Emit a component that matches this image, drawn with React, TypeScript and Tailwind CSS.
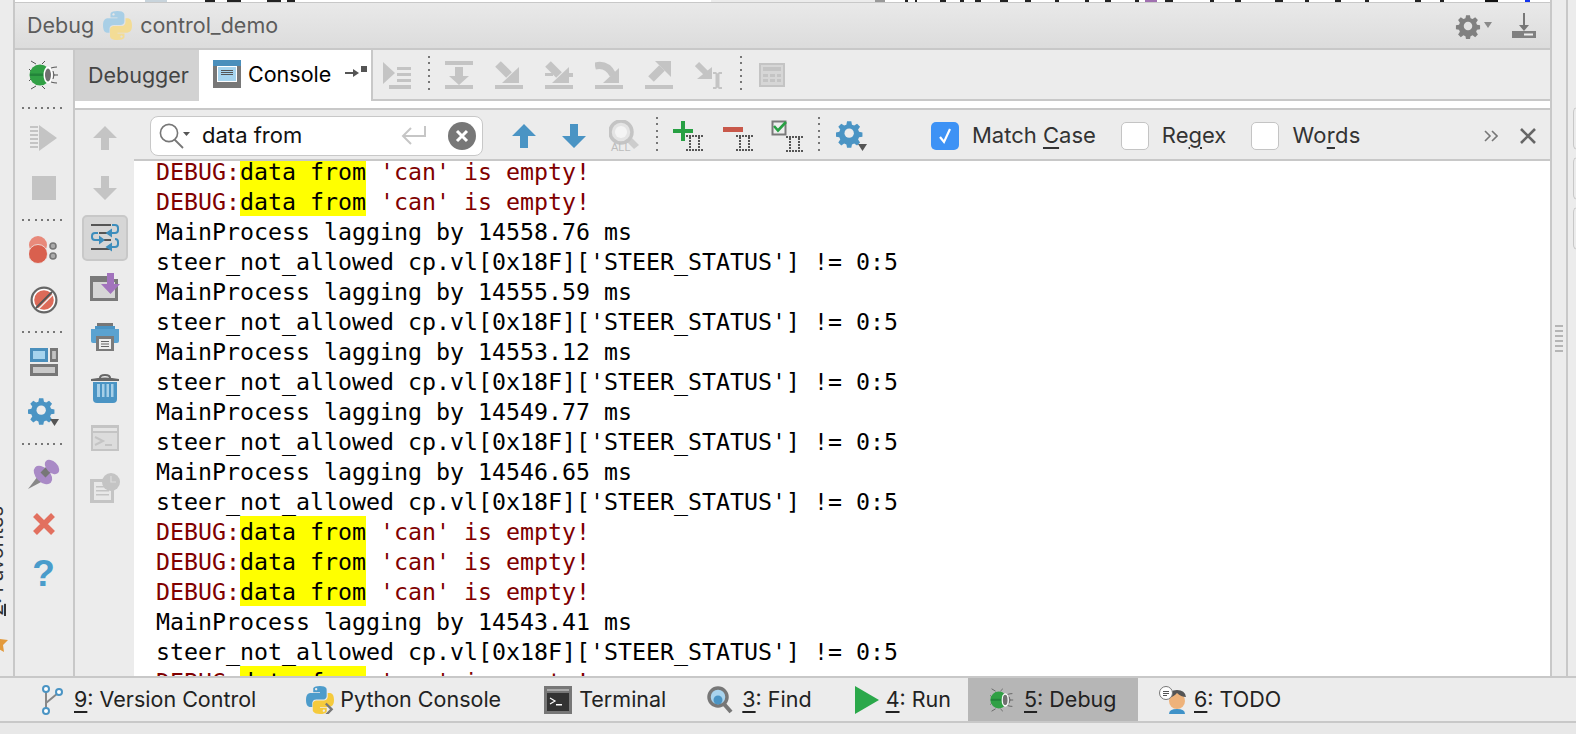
import React from "react";

const G = "#c4c4c4";
const B = "#4a94c4";

type P = { w?: number; h?: number; vb?: string; children?: React.ReactNode; className?: string };
const Ico = ({ w = 28, h = 28, vb, children, className = "" }: P) => (
  <svg width={w} height={h} viewBox={vb ?? `0 0 ${w} ${h}`} className={"block shrink-0 " + className}>
    {children}
  </svg>
);

const HSep = ({ className = "" }: { className?: string }) => (
  <div className={"w-[44px] h-[2px] bg-[repeating-linear-gradient(to_right,#777_0,#777_2px,transparent_2px,transparent_6.3px)] " + className} />
);
const VSep = ({ className = "" }: { className?: string }) => (
  <div className={"w-[2px] h-[38px] shrink-0 bg-[repeating-linear-gradient(to_bottom,#777_0,#777_2px,transparent_2px,transparent_6.3px)] " + className} />
);

const Bug = ({ size = 30 }: { size?: number }) => (
  <Ico w={size} h={size} vb="0 0 30 30">
    <g stroke="#555" strokeWidth="1" fill="none">
      <path d="M2 1 L7 4 M16 1 L13 4 M2 29 L7 26 M16 29 L13 26 M0 9 L2 11 M0 21 L2 19" />
      <path d="M22 8 Q25 7 28 7 M24 15 L29 15 M22 22 Q25 23 28 23 M24 11 Q26 15 24 19" />
    </g>
    <circle cx="11" cy="15" r="10.500" fill="#31a045" />
    <path d="M1 13.500 H20 V16 H1Z" fill="#23843a" />
    <ellipse cx="19" cy="15" rx="4.500" ry="8.500" fill="#fff" />
    <ellipse cx="19" cy="15" rx="3" ry="6.500" fill="#707070" />
  </Ico>
);

const PyLogo = ({ size = 26, pale = false }: { size?: number; pale?: boolean }) => (
  <Ico w={size} h={size} vb="0 0 24 24">
    <path
      fill={pale ? "#a9cfe6" : "#4d9ccb"}
      d="M11.9 0C5.8 0 6.2 2.6 6.2 2.6v2.7h5.8v.8H3.9S0 5.7 0 11.9s3.4 6 3.4 6h2v-2.9s-.1-3.4 3.4-3.4h5.7s3.2 0 3.2-3.1V3.2S18.2 0 11.9 0zM8.7 1.8c.6 0 1 .5 1 1s-.5 1-1 1-1-.5-1-1 .5-1 1-1z"
    />
    <path
      fill={pale ? "#f3dc95" : "#f5ca3c"}
      d="M12.1 24c6.1 0 5.7-2.6 5.7-2.6v-2.7H12v-.8h8.1s3.9.4 3.9-5.8-3.4-6-3.4-6h-2v2.9s.1 3.4-3.4 3.4H9s-3.2 0-3.2 3.1v5.3S5.8 24 12.1 24zm3.2-1.8c-.6 0-1-.5-1-1s.5-1 1-1 1 .5 1 1-.5 1-1 1z"
    />
    {!pale && <path d="M17 15 L22 20 L17 25" stroke="#777" strokeWidth="2" fill="none" />}
  </Ico>
);

const gearPath =
  "M11.5 0h5l.8 4 2.6 1.1 3.4-2.3 3.5 3.5-2.3 3.4 1.1 2.6 4 .8v5l-4 .8-1.1 2.6 2.3 3.4-3.5 3.5-3.4-2.3-2.6 1.1-.8 4h-5l-.8-4-2.6-1.1-3.4 2.3-3.5-3.5 2.3-3.4-1.1-2.6-4-.8v-5l4-.8 1.1-2.6-2.3-3.4 3.5-3.5 3.4 2.3 2.6-1.1z";
const Gear = ({ size, color, hole = "#ececec" }: { size: number; color: string; hole?: string }) => (
  <g transform={`scale(${size / 31})`}>
    <path d={gearPath} fill={color} fillRule="evenodd" transform="translate(1.5 1.5)" />
    <circle cx="15.5" cy="15.5" r="5.5" fill={hole} />
  </g>
);

const Bar = () => <rect x="0" y="24" width="28" height="4" fill={G} />;

/* ---------- debugger toolbar ---------- */
const TbShow = () => (
  <Ico>
    <path d="M0 0 L12 11 L0 22Z" fill={G} transform="translate(0 1)" />
    <path d="M14 6h14v3H14zM14 12h14v3H14zM14 18h14v3H14zM6 24h22v4H6z" fill={G} />
  </Ico>
);
const TbStepOver = () => (
  <Ico>
    <rect width="28" height="4" fill={G} />
    <path d="M10 6h8v9h6l-10 9-10-9h6z" fill={G} />
    <Bar />
  </Ico>
);
const TbInto = () => (
  <Ico>
    <path d="M3 3 L14 14" stroke={G} strokeWidth="8" />
    <path d="M24 6v16H7z" fill={G} />
    <Bar />
  </Ico>
);
const TbSmart = () => (
  <Ico>
    <path d="M3 3 L14 14" stroke={G} strokeWidth="8" />
    <path d="M24 6v16H7z" fill={G} />
    <path d="M0 12h8v3H0zM22 12h6v4h-6z" fill={G} />
    <Bar />
  </Ico>
);
const TbForce = () => (
  <Ico>
    <path d="M0 5 C8 3 14 6 18 14" stroke={G} strokeWidth="7" fill="none" />
    <path d="M24 7v15H8z" fill={G} />
    <Bar />
  </Ico>
);
const TbOut = () => (
  <Ico>
    <path d="M6 18 L17 7" stroke={G} strokeWidth="8" />
    <path d="M10 0h16v16z" fill={G} />
    <Bar />
  </Ico>
);
const TbCursor = () => (
  <Ico>
    <path d="M2 3 L11 12" stroke={G} strokeWidth="6" />
    <path d="M17 6v12H2z" fill={G} />
    <path d="M18 11h3l1.5 1.5L24 11h3v2h-2.5v13H27v2h-3l-1.5-1.5L21 28h-3v-2h2.5V13H18z" fill={G} />
  </Ico>
);
const TbTable = () => (
  <Ico w={26} h={24}>
    <rect x="1" y="1" width="24" height="22" fill="#d6d6d6" stroke={G} strokeWidth="2" />
    <rect x="4" y="4" width="18" height="4" fill={G} />
    <path d="M4 11h5v3H4zM11 11h5v3h-5zM18 11h4v3h-4zM4 16h5v3H4zM11 16h5v3h-5zM18 16h4v3h-4z" fill={G} />
  </Ico>
);

/* ---------- left column 1 ---------- */
const Rerun = () => (
  <Ico w={28} h={28}>
    <path d="M9 1 L27 14 L9 27Z" fill={G} />
    <path d="M0 2h8v2H0zM0 6h8v2H0zM0 10h8v2H0zM0 14h8v2H0zM0 18h8v2H0zM0 22h8v2H0z" fill={G} />
  </Ico>
);
const Stop = () => <div className="w-[24px] h-[24px] bg-[#c4c4c4]" />;
const Breakpoints = () => (
  <Ico w={30} h={30}>
    <circle cx="9" cy="10" r="9" fill="#e8897a" />
    <circle cx="9" cy="19" r="9.5" fill="#d9604e" stroke="#eee" strokeWidth="0.8" />
    <circle cx="24" cy="11" r="3" fill="#aaa" stroke="#777" strokeWidth="1.6" />
    <circle cx="24" cy="21" r="3" fill="#aaa" stroke="#777" strokeWidth="1.6" />
  </Ico>
);
const Mute = () => (
  <Ico w={28} h={28}>
    <circle cx="14" cy="14" r="12.4" fill="#fff" stroke="#666" strokeWidth="2.2" />
    <circle cx="14" cy="14" r="9.8" fill="#dd6a59" />
    <path d="M6 22 L22 6" stroke="#555" strokeWidth="2" />
    <path d="M8.5 23 L23 8.5" stroke="#eee" strokeWidth="1.4" />
  </Ico>
);
const LayoutIco = () => (
  <Ico w={28} h={28}>
    <rect x="3" y="3" width="12" height="8" fill="#a6d4ee" />
    <path d="M0 0h18v14H0zM3 3v8h12V3z" fill="#4a8fbc" fillRule="evenodd" />
    <path d="M20 0h8v14h-8zM22.500 3v8h3V3z" fill="#777" fillRule="evenodd" />
    <rect x="22.500" y="3" width="3" height="8" fill="#c4c4c4" />
    <path d="M0 16h28v12H0zM3 19v6h22v-6z" fill="#777" fillRule="evenodd" />
    <rect x="3" y="19" width="22" height="6" fill="#c9c9c9" />
  </Ico>
);
const SettingsBlue = () => (
  <Ico w={32} h={30}>
    <g transform="scale(0.85)">
      <Gear size={31} color={B} />
    </g>
    <path d="M22 22h9l-4.5 7z" fill="#555" />
  </Ico>
);
const Pin = () => (
  <Ico w={32} h={32}>
    <path d="M0 30 L10 17 L15 22Z" fill="#888" />
    <ellipse cx="15" cy="16" rx="11" ry="7" transform="rotate(45 15 16)" fill="#a98ac6" />
    <path d="M15 16 L22 9" stroke="#777" strokeWidth="7" />
    <ellipse cx="24" cy="8" rx="8.500" ry="5.500" transform="rotate(45 24 8)" fill="#a98ac6" />
  </Ico>
);
const RedX = () => (
  <Ico w={24} h={24}>
    <path d="M3 3 L21 21 M21 3 L3 21" stroke="#e2705f" strokeWidth="5.5" />
  </Ico>
);
const Help = () => (
  <span className="block text-[#4a9ccb] font-bold text-[37px] leading-[32px] font-['Liberation_Sans',sans-serif]">?</span>
);

/* ---------- column 2 ---------- */
const UpArrow = ({ c = G, w = 24 }: { c?: string; w?: number }) => (
  <Ico w={w} h={24} vb="0 0 24 24">
    <path d="M12 0 L24 12 H16 V24 H8 V12 H0Z" fill={c} />
  </Ico>
);
const DownArrow = ({ c = G, w = 24 }: { c?: string; w?: number }) => (
  <Ico w={w} h={24} vb="0 0 24 24">
    <path d="M12 24 L24 12 H16 V0 H8 V12 H0Z" fill={c} />
  </Ico>
);
const Wrap = () => (
  <Ico w={28} h={28}>
    <path d="M0 0h20v2H0zM8 8h8v2H8zM12 15h8v2h-8zM0 24h20v2H0z" fill="#555" />
    <g fill="none" stroke="#3c8dbc" strokeWidth="2">
      <path d="M21 1h3q3 0 3 3v2q0 3-3 3h-4" />
      <path d="M7 9H4q-3 0-3 3v1q0 3 3 3h4" />
      <path d="M24 15q3 0 3 3v2q0 3-3 3h-4" />
    </g>
    <path d="M21 4.500v9l-6.500-4.500zM8 11.500v9l6-4.500zM21 18.500v9l-6.500-4.500z" fill="#3c8dbc" />
  </Ico>
);
const ScrollEnd = () => (
  <Ico w={30} h={28}>
    <path d="M0 3h18v3h10v22H0z" fill="#7a7a7a" />
    <rect x="3" y="9" width="22" height="16" fill="#d6d6d6" />
    <path d="M17 0h7v11h6l-9.500 10L11 11h6z" fill="#a273bd" />
  </Ico>
);
const Print = () => (
  <Ico w={28} h={28}>
    <path d="M6 0h16v4H6z" fill="#777" />
    <path d="M4 3h20v3H4z" fill="#4a94c4" />
    <path d="M0 6h28v12a2 2 0 0 1-2 2H2a2 2 0 0 1-2-2z" fill="#5aa2d0" />
    <rect x="5" y="13" width="18" height="15" fill="#7a7a7a" />
    <rect x="8" y="16" width="12" height="10" fill="#eee" />
    <path d="M10 18h8v1h-8zM10 20.500h8v1h-8zM10 23h8v1h-8z" fill="#666" />
  </Ico>
);
const Trash = () => (
  <Ico w={28} h={30}>
    <path d="M9 5 C9 1 19 1 19 5" stroke="#666" strokeWidth="2" fill="none" />
    <path d="M0 6 Q14 3 28 6 V8 H0Z" fill="#666" />
    <path d="M2 9h24v17a4 4 0 0 1-4 4H6a4 4 0 0 1-4-4z" fill="#4a94c4" />
    <path d="M6 11h3v13H6zM11 11h2.500v13H11zM15.500 11H18v13h-2.500zM20 11h2.500v13H20z" fill="#a6cfe8" />
  </Ico>
);
const ConsoleIco = () => (
  <Ico w={28} h={26}>
    <rect width="28" height="26" fill={G} />
    <rect x="2" y="3" width="24" height="3" fill="#e4e4e4" />
    <rect x="2" y="8" width="24" height="16" fill="#dcdcdc" />
    <path d="M4 12 L12 16 L4 20" stroke={G} strokeWidth="2" fill="none" />
    <rect x="14" y="19" width="7" height="2" fill={G} />
  </Ico>
);
const History = () => (
  <Ico w={30} h={30}>
    <rect x="0" y="6" width="24" height="24" fill={G} />
    <rect x="4" y="9" width="17" height="18" fill="#e8e8e8" />
    <path d="M6 13h13v1.500H6zM6 17h13v1.500H6zM6 21h13v1.500H6z" fill={G} />
    <circle cx="21" cy="9" r="9" fill={G} />
    <path d="M21 3v6h5" stroke="#dcdcdc" strokeWidth="1.200" fill="none" />
  </Ico>
);

/* ---------- find bar ---------- */
const Magnifier = () => (
  <Ico w={36} h={26}>
    <circle cx="10" cy="10" r="8.600" stroke="#777" strokeWidth="1.600" fill="none" />
    <path d="M15.500 16.500 L24 25" stroke="#777" strokeWidth="1.800" />
    <path d="M24 9h7l-3.500 4z" fill="#555" />
  </Ico>
);
const EnterIco = () => (
  <Ico w={26} h={22}>
    <path d="M24 1v10H3" stroke="#c6c6c6" strokeWidth="2" fill="none" />
    <path d="M10 3 L2 11 L10 19" stroke="#c6c6c6" strokeWidth="2" fill="none" />
  </Ico>
);
const ClearIco = () => (
  <Ico w={28} h={28}>
    <circle cx="14" cy="14" r="14" fill="#777" />
    <path d="M9 9 L19 19 M19 9 L9 19" stroke="#fff" strokeWidth="3" />
  </Ico>
);
const FindAll = () => (
  <Ico w={30} h={32}>
    <path d="M23 18 L30 25 L25 29 L18 22Z" fill="#cdcdcd" />
    <circle cx="12" cy="12" r="11" stroke={G} strokeWidth="3.500" fill="#e4e4e4" />
    <circle cx="12" cy="12" r="6" fill="#f4f4f4" />
    <text x="2" y="31" fontSize="11" fontFamily="'Liberation Sans',sans-serif" fill="#bcbcbc">ALL</text>
  </Ico>
);
const IBeam = () => (
  <g stroke="#555" strokeWidth="2" strokeDasharray="2 1" fill="none">
    <path d="M0 1h17M0 15h17M4 2v12M13 2v12" />
  </g>
);
const AddOcc = () => (
  <Ico w={30} h={30}>
    <path d="M8 0h4v8h8v4h-8v8H8v-8H0V8h8z" fill="#27a043" />
    <g transform="translate(13 14)"><IBeam /></g>
  </Ico>
);
const RemoveOcc = () => (
  <Ico w={30} h={30}>
    <rect y="6" width="20" height="5" fill="#c8584a" />
    <g transform="translate(13 14)"><IBeam /></g>
  </Ico>
);
const SelectOcc = () => (
  <Ico w={32} h={32}>
    <rect x="1.500" y="1.500" width="13" height="13" fill="#eee" stroke="#7a7a7a" strokeWidth="2" />
    <path d="M3 6 L7 10.500 L15 2" stroke="#27a043" strokeWidth="2.600" fill="none" />
    <g transform="translate(15 16)"><IBeam /></g>
  </Ico>
);
const Check = ({ on = false }: { on?: boolean }) =>
  on ? (
    <div className="w-[28px] h-[28px] rounded-[5px] bg-[#3d92f5] flex items-center justify-center shrink-0">
      <Ico w={20} h={20}>
        <path d="M5 11 L9 16 L15 3" stroke="#fff" strokeWidth="2.200" fill="none" />
      </Ico>
    </div>
  ) : (
    <div className="w-[28px] h-[28px] rounded-[5px] bg-white border border-[#c4c4c4] shrink-0" />
  );

/* ---------- status bar icons ---------- */
const VcsIco = () => (
  <Ico w={22} h={30}>
    <path d="M5 6 V24 M5 18 L17 8" stroke="#888" strokeWidth="2" fill="none" />
    <circle cx="5" cy="4" r="3" fill="#fff" stroke="#4a94c4" strokeWidth="2" />
    <circle cx="5" cy="26" r="3" fill="#fff" stroke="#4a94c4" strokeWidth="2" />
    <circle cx="18" cy="7" r="3" fill="#fff" stroke="#4a94c4" strokeWidth="2" />
  </Ico>
);
const TermIco = () => (
  <Ico w={28} h={28}>
    <rect width="28" height="28" fill="#777" />
    <rect x="3" y="7" width="22" height="18" fill="#333" />
    <rect x="3" y="3" width="22" height="2" fill="#aaa" />
    <path d="M6 12 L11 15 L6 18" stroke="#fff" strokeWidth="1.200" fill="none" />
    <rect x="12" y="18" width="6" height="1.500" fill="#fff" />
  </Ico>
);
const FindIco = () => (
  <Ico w={26} h={28}>
    <circle cx="11" cy="11" r="9" fill="#a9d4ee" stroke="#777" strokeWidth="3.500" />
    <circle cx="11" cy="14" r="4.500" fill="#4a94c4" />
    <path d="M17 18 L24 26" stroke="#777" strokeWidth="4" />
  </Ico>
);
const RunIco = () => (
  <Ico w={24} h={28}>
    <path d="M0 0 L24 14 L0 28Z" fill="#2aa84a" />
  </Ico>
);
const TodoIco = () => (
  <Ico w={30} h={28}>
    <circle cx="18" cy="15" r="8" fill="#eeb27a" />
    <path d="M9 11 Q14 12 18 7 Q22 11 27 11 Q26 4 18 4 Q10 4 9 11z" fill="#555" />
    <path d="M10 28 Q10 23 18 23 Q26 23 26 28z" fill="#3f92c8" />
    <circle cx="7" cy="7" r="6.500" fill="#fff" stroke="#777" strokeWidth="1" />
    <path d="M4 5h6v1H4zM4 7h6v1H4zM4 9h4v1H4z" fill="#555" />
  </Ico>
);

const lines: string[] = [
  "d",
  "d",
  "MainProcess lagging by 14558.76 ms",
  "s",
  "MainProcess lagging by 14555.59 ms",
  "s",
  "MainProcess lagging by 14553.12 ms",
  "s",
  "MainProcess lagging by 14549.77 ms",
  "s",
  "MainProcess lagging by 14546.65 ms",
  "s",
  "d",
  "d",
  "d",
  "MainProcess lagging by 14543.41 ms",
  "s",
  "d",
];

const Line = ({ t }: { t: string }) => {
  if (t === "d")
    return (
      <div className="h-[30px] text-[#800000]">
        DEBUG:<span className="inline-block h-[30px] align-top bg-[#ffff00] text-black">data from</span> 'can' is empty!
      </div>
    );
  return <div className="h-[30px] text-black">{t === "s" ? "steer_not_allowed cp.vl[0x18F]['STEER_STATUS'] != 0:5" : t}</div>;
};

const StatusItem = ({
  icon,
  n,
  label,
  className = "",
  gap = "gap-[8px]",
}: {
  icon: React.ReactNode;
  n?: string;
  label: string;
  className?: string;
  gap?: string;
}) => (
  <div className={"flex items-center h-full " + gap + " " + className}>
    {icon}
    <span className="whitespace-pre">
      {n && <span className="underline underline-offset-[4px] decoration-[1.5px]">{n}</span>}
      {n ? ": " + label : label}
    </span>
  </div>
);

export default function App() {
  return (
    <div className="w-[1576px] h-[734px] overflow-hidden flex flex-col bg-[#ececec] text-[#222] font-['Inter','Liberation_Sans',sans-serif] text-[22px]">
      <div className="flex flex-1 min-h-0">
        {/* far-left strip */}
        <div className="w-[15px] shrink-0 border-r-2 border-[#c8c8c8] bg-[#ececec] relative overflow-hidden">
          <div className="absolute left-[-64px] top-[543px] w-[120px] h-[26px] leading-[26px] -rotate-90 text-[20px] text-[#333] whitespace-nowrap">
            <span className="underline">2</span>: Favorites
          </div>
          <svg width="10" height="18" viewBox="0 0 10 18" className="absolute left-0 top-[634px]">
            <path d="M-3 0 L0 5 L8 6 L3 11 L4 18 L-3 14Z" fill="#e39a3c" />
          </svg>
        </div>

        {/* main */}
        <div className="flex-1 min-w-0 flex flex-col">
          {/* cropped row above */}
          <div className="h-[3px] bg-white border-b-[1px] border-[#c8c8c8] shrink-0 relative overflow-hidden">
            <svg width="1535" height="2" viewBox="0 0 1535 2" className="block">
              <rect x="130" width="22" height="2" fill="#c8d4dc" />
              <rect x="190" width="10" height="2" fill="#222" />
              <rect x="212" width="14" height="2" fill="#222" />
              <rect x="252" width="14" height="2" fill="#222" />
              <rect x="272" width="8" height="2" fill="#222" />
              <rect x="696" width="165" height="2" fill="#ececec" />
              <rect x="860" width="10" height="2" fill="#999" />
              <path d="M890 0h3v2h-3zM900 0h2v2h-2zM925 0h6v2h-6zM945 0h4v2h-4zM960 0h6v2h-6zM985 0h8v2h-8zM1010 0h6v2h-6zM1040 0h4v2h-4zM1070 0h4v2h-4zM1090 0h6v2h-6zM1120 0h4v2h-4zM1150 0h8v2h-8zM1195 0h4v2h-4zM1220 0h6v2h-6zM1260 0h8v2h-8zM1290 0h4v2h-4zM1320 0h6v2h-6zM1350 0h4v2h-4zM1400 0h6v2h-6zM1425 0h4v2h-4z" fill="#222" />
              <rect x="1130" width="12" height="2" fill="#a070b0" />
              <rect x="1470" width="13" height="2" fill="#111" />
              <rect x="1510" width="5" height="2" fill="#1133ee" />
            </svg>
          </div>

          {/* title bar */}
          <div className="h-[47px] shrink-0 flex items-center bg-gradient-to-b from-[#e9e9e9] to-[#dcdcdc] border-b-2 border-[#c8c8c8] pl-[12px] text-[#5c5c5c]">
            <span className="text-[21.5px]">Debug</span>
            <span className="ml-[9px]"><PyLogo size={29} pale /></span>
            <span className="ml-[8px] text-[21.5px]">control_demo</span>
            <div className="ml-auto flex items-center">
              <Ico w={38} h={26}>
                <g transform="translate(1 1)"><Gear size={24} color="#808080" hole="#e2e2e2" /></g>
                <path d="M29 9h8l-4 6z" fill="#8a8a8a" />
              </Ico>
              <Ico w={24} h={26} className="ml-[19px] mr-[14px]">
                <path d="M11 0h2v12h4l-5 6-5-6h4z" fill="#777" />
                <path d="M0 18h24v7H0z" fill="#808080" />
                <path d="M12 20.500h9v2h-9z" fill="#eee" />
              </Ico>
            </div>
          </div>

          {/* debug tool window */}
          <div className="flex flex-1 min-h-0">
            {/* column 1 */}
            <div className="w-[60px] shrink-0 border-r-2 border-[#c8c8c8] flex flex-col items-center pr-[1px]">
              <div className="h-[9px] shrink-0" />
              <div className="h-[32px] flex items-center"><Bug /></div>
              <HSep className="mt-[16px]" />
              <div className="mt-[13px] h-[32px] flex items-center"><Rerun /></div>
              <div className="mt-[18px] h-[32px] flex items-center"><Stop /></div>
              <HSep className="mt-[15px]" />
              <div className="mt-[13px] h-[32px] flex items-center"><Breakpoints /></div>
              <div className="mt-[18px] h-[32px] flex items-center"><Mute /></div>
              <HSep className="mt-[15px]" />
              <div className="mt-[13px] h-[32px] flex items-center"><LayoutIco /></div>
              <div className="mt-[18px] h-[32px] flex items-center"><SettingsBlue /></div>
              <HSep className="mt-[15px]" />
              <div className="mt-[14px] h-[32px] flex items-center"><Pin /></div>
              <div className="mt-[17px] h-[32px] flex items-center"><RedX /></div>
              <div className="mt-[18px] h-[32px] flex items-center"><Help /></div>
            </div>

            {/* right of col 1 */}
            <div className="flex-1 min-w-0 flex flex-col">
              {/* tabs */}
              <div className="h-[60px] shrink-0 flex bg-white border-b-2 border-[#c8c8c8]">
                <div className="w-[124px] h-[51px] shrink-0 bg-[#d2d2d2] flex items-center pl-[13px] text-[#444] text-[21.5px]">Debugger</div>
                <div className="w-[172px] shrink-0 bg-white flex items-start pt-[7px] pl-[14px]">
                  <div className="w-[28px] h-[28px] shrink-0 bg-[#777] flex flex-col mt-[3px]">
                    <div className="h-[6px] bg-[#4a8fbc]" />
                    <div className="mx-[4px] h-[16px] bg-[#a6d4ee] border border-white flex flex-col gap-[1px] px-[3px] pt-[3px]">
                      <div className="h-[1px] bg-[#555]" />
                      <div className="h-[1px] bg-[#555]" />
                      <div className="h-[1px] bg-[#555]" />
                    </div>
                  </div>
                  <span className="ml-[7px] mt-[2px] text-black text-[21.5px] leading-[30px]">Console</span>
                  <Ico w={24} h={14} className="ml-[14px] mt-[8px]">
                    <path d="M0 8h11" stroke="#555" strokeWidth="2" />
                    <path d="M8 4l6 4-6 4z" fill="#555" />
                    <rect x="16" y="1" width="6" height="6" fill="#555" />
                  </Ico>
                </div>
                <div className="flex-1 h-[51px] bg-[#ececec] border-l-2 border-b-2 border-[#c8c8c8] flex items-center">
                  <span className="ml-[10px]"><TbShow /></span>
                  <VSep className="ml-[17px]" />
                  <span className="ml-[15px]"><TbStepOver /></span>
                  <span className="ml-[22px]"><TbInto /></span>
                  <span className="ml-[22px]"><TbSmart /></span>
                  <span className="ml-[22px]"><TbForce /></span>
                  <span className="ml-[22px]"><TbOut /></span>
                  <span className="ml-[22px]"><TbCursor /></span>
                  <VSep className="ml-[17px]" />
                  <span className="ml-[17px]"><TbTable /></span>
                </div>
              </div>

              <div className="flex flex-1 min-h-0">
                {/* column 2 */}
                <div className="w-[59px] shrink-0 flex flex-col items-center bg-[#ececec]">
                  <div className="mt-[16px] h-[24px]"><UpArrow /></div>
                  <div className="mt-[26px] h-[24px]"><DownArrow /></div>
                  <div className="mt-[15px] w-[46px] h-[46px] rounded-[5px] bg-[#d6d6d6] border-2 border-[#c8c8c8] flex items-center justify-center"><Wrap /></div>
                  <div className="mt-[12px]"><ScrollEnd /></div>
                  <div className="mt-[22px]"><Print /></div>
                  <div className="mt-[22px]"><Trash /></div>
                  <div className="mt-[22px]"><ConsoleIco /></div>
                  <div className="mt-[22px]"><History /></div>
                </div>

                <div className="flex-1 min-w-0 flex flex-col">
                  {/* find bar */}
                  <div className="h-[51px] shrink-0 flex items-center bg-[#ececec] border-b-2 border-[#c8c8c8] pl-[16px] pt-[2px]">
                    <div className="w-[333px] h-[40px] shrink-0 rounded-[8px] bg-white border border-[#c8c8c8] flex items-center pl-[8px] pr-[6px]">
                      <Magnifier />
                      <span className="ml-[7px] text-[#111]">data from</span>
                      <span className="ml-auto mr-[21px]"><EnterIco /></span>
                      <ClearIco />
                    </div>
                    <span className="ml-[29px]"><UpArrow c={B} /></span>
                    <span className="ml-[26px]"><DownArrow c={B} /></span>
                    <span className="ml-[23px]"><FindAll /></span>
                    <VSep className="ml-[17px]" />
                    <span className="ml-[15px]"><AddOcc /></span>
                    <span className="ml-[20px]"><RemoveOcc /></span>
                    <span className="ml-[18px]"><SelectOcc /></span>
                    <VSep className="ml-[15px]" />
                    <Ico w={31} h={31} className="ml-[16px]">
                      <g transform="scale(0.85)"><Gear size={31} color={B} /></g>
                      <path d="M22 24h9l-4.500 7z" fill="#555" />
                    </Ico>
                    <span className="ml-[64px]"><Check on /></span>
                    <span className="ml-[13px] text-[#333]">Match <span className="underline underline-offset-[4px]">C</span>ase</span>
                    <span className="ml-[25px]"><Check /></span>
                    <span className="ml-[13px] text-[#333]">Re<span className="underline underline-offset-[4px]">g</span>ex</span>
                    <span className="ml-[25px]"><Check /></span>
                    <span className="ml-[13px] text-[#333] tracking-[0.3px]">Wo<span className="underline underline-offset-[4px]">r</span>ds</span>
                    <Ico w={14} h={12} className="ml-auto">
                      <path d="M1 1 L6 6 L1 11 M8 1 L13 6 L8 11" stroke="#777" strokeWidth="1.600" fill="none" />
                    </Ico>
                    <Ico w={16} h={16} className="ml-[22px] mr-[14px]">
                      <path d="M1 1 L15 15 M15 1 L1 15" stroke="#666" strokeWidth="2.600" />
                    </Ico>
                  </div>

                  {/* console */}
                  <div className="flex-1 min-h-0 overflow-hidden bg-white pl-[22px] font-['DejaVu_Sans_Mono','Liberation_Mono',monospace] text-[23.25px] leading-[32px] whitespace-pre">
                    <div className="-mt-[5px]">
                      {lines.map((t, i) => (
                        <Line key={i} t={t} />
                      ))}
                    </div>
                  </div>
                </div>
              </div>
            </div>
          </div>
        </div>

        {/* right strips */}
        <div className="w-[18px] shrink-0 border-l-2 border-r-2 border-[#c8c8c8] bg-[#ececec] flex items-start justify-center pt-[325px]">
          <div className="w-[8px] h-[30px] bg-[repeating-linear-gradient(to_bottom,#b5b5b5_0,#b5b5b5_2px,transparent_2px,transparent_5px)]" />
        </div>
        <div className="w-[8px] shrink-0 bg-[#ececec] pt-[107px] pl-[5px] flex flex-col gap-[7px]">
          <div className="h-[43px] w-[6px] rounded-l-[5px] border-l border-y border-[#c8c8c8]" />
          <div className="h-[43px] w-[6px] rounded-l-[5px] border-l border-y border-[#c8c8c8]" />
          <div className="h-[43px] w-[6px] rounded-l-[5px] border-l border-y border-[#c8c8c8]" />
        </div>
      </div>

      {/* status bar */}
      <div className="h-[47px] shrink-0 flex items-center bg-[#ececec] border-y-2 border-[#c8c8c8] pl-[41px] text-[#222] text-[21.5px]">
        <StatusItem icon={<VcsIco />} n="9" label="Version Control" gap="gap-[11px]" />
        <StatusItem icon={<PyLogo size={28} />} label="Python Console" gap="gap-[6px]" className="ml-[50px]" />
        <StatusItem icon={<TermIco />} label="Terminal" gap="gap-[7px]" className="ml-[43px]" />
        <StatusItem icon={<FindIco />} n="3" label="Find" gap="gap-[9px]" className="ml-[41px]" />
        <StatusItem icon={<RunIco />} n="4" label="Run" gap="gap-[7px]" className="ml-[43px]" />
        <StatusItem
          icon={<Bug size={24} />}
          n="5"
          label="Debug"
          gap="gap-[10px]"
          className="ml-[17px] bg-[#b6b6b6] w-[170px] pl-[22px]"
        />
        <StatusItem icon={<TodoIco />} n="6" label="TODO" gap="gap-[5px]" className="ml-[21px]" />
      </div>
      <div className="h-[11px] shrink-0 bg-[#e8e8e8]" />
    </div>
  );
}
